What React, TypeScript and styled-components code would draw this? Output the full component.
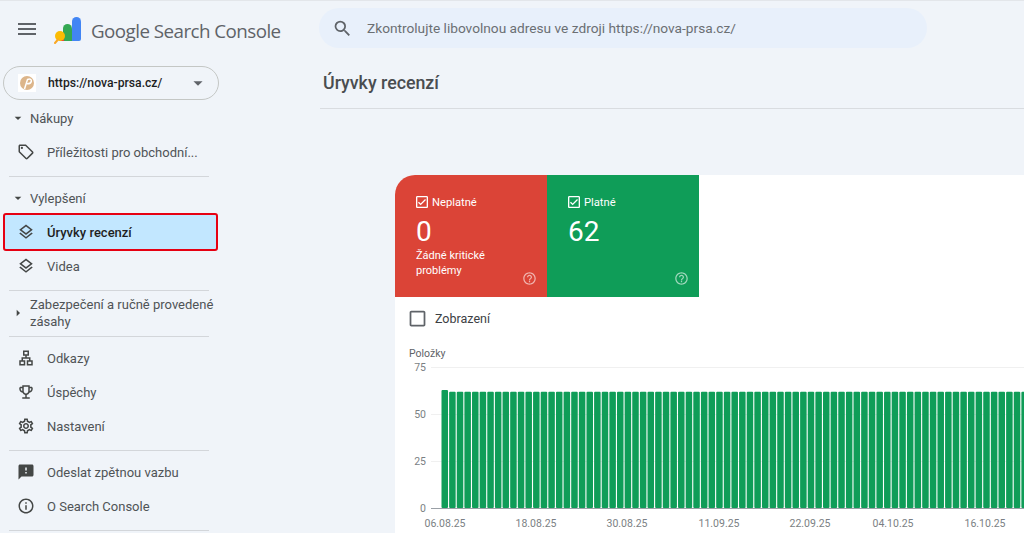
import * as React from "react";
import styled, { createGlobalStyle } from "styled-components";
import {
  MdMenu,
  MdSearch,
  MdArrowDropDown,
  MdArrowRight,
  MdOutlineSell,
  MdOutlineLayers,
  MdOutlineLan,
  MdOutlineEmojiEvents,
  MdOutlineSettings,
  MdFeedback,
  MdInfoOutline,
  MdOutlineCheckBox,
  MdCheckBoxOutlineBlank,
  MdHelpOutline,
} from "react-icons/md";

const GlobalStyle = createGlobalStyle`
  html, body { margin: 0; padding: 0; background: #f0f4f9; }
  body { font-family: Roboto, "Liberation Sans", sans-serif; }
  * { box-sizing: border-box; }
`;

const Page = styled.div`
  width: 1024px;
  height: 533px;
  overflow: hidden;
  background: #f0f4f9;
  border-top: 1px solid #e3e6ea;
  display: flex;
  flex-direction: column;
`;

const Header = styled.header`
  height: 55px;
  flex: none;
  display: flex;
  align-items: center;
  padding-left: 15px;
`;

const MenuButton = styled.div`
  width: 24px;
  height: 24px;
  color: #5f6368;
  font-size: 24px;
  display: flex;
  margin-right: 15px;
`;

const Logo = styled.svg`
  width: 28px;
  height: 28px;
  flex: none;
  margin: 3px 9px 0 0;
`;

const Brand = styled.div`
  width: 228px;
  flex: none;
  margin-top: 5px;
  font-family: "Open Sans", sans-serif;
  font-size: 18.8px;
  letter-spacing: -0.55px;
  color: #5f6368;
  white-space: nowrap;
`;

const SearchBox = styled.div`
  width: 608px;
  height: 40px;
  margin-top: -1px;
  border-radius: 20px;
  background: #e8f0fb;
  display: flex;
  align-items: center;
  padding-left: 13px;
  gap: 14px;
  color: #6b6f73;
  font-size: 13.7px;
  svg {
    font-size: 21px;
    color: #5f6368;
  }
`;

const Body = styled.div`
  flex: 1;
  display: flex;
  min-height: 0;
`;

const Sidebar = styled.nav`
  width: 320px;
  flex: none;
  padding: 10px 0 0 3px;
  color: #4f5356;
  font-size: 13px;
`;

const Property = styled.div`
  width: 216px;
  height: 34px;
  border: 1px solid #c4c7c5;
  border-radius: 17px;
  display: flex;
  align-items: center;
  padding-left: 14px;
  color: #1f1f1f;
  font-weight: 500;
  font-size: 12.2px;
  margin-bottom: 1px;
`;

const Favicon = styled.svg`
  width: 18px;
  height: 18px;
  margin-right: 12px;
  flex: none;
`;

const PropertyUrl = styled.span`
  width: 128px;
  white-space: nowrap;
`;

const PropertyCaret = styled(MdArrowDropDown)`
  font-size: 22px;
  color: #5f6368;
  margin-left: 11px;
  flex: none;
`;

const SectionTitle = styled.div`
  width: 216px;
  min-height: 34px;
  display: flex;
  align-items: center;
  padding-left: 7px;
  line-height: 17px;
  svg {
    font-size: 16px;
    flex: none;
    margin-right: 4px;
    color: #444746;
  }
`;

const WrappedSectionTitle = styled(SectionTitle)`
  padding-top: 1px;
  margin-bottom: -1px;
`;

const Row = styled.div<{ $active?: boolean }>`
  width: 211px;
  height: 34px;
  margin-left: 2px;
  display: flex;
  align-items: center;
  padding-left: 12px;
  gap: 12px;
  background: ${(p) => (p.$active ? "#c2e7ff" : "transparent")};
  color: ${(p) => (p.$active ? "#1f1f1f" : "#4f5356")};
  font-weight: ${(p) => (p.$active ? 500 : 400)};
  outline: ${(p) => (p.$active ? "2px solid #e60012" : "none")};
  border-radius: ${(p) => (p.$active ? "1px" : "0")};
  white-space: nowrap;
  svg {
    font-size: 18px;
    flex: none;
    color: #444746;
  }
`;

const Divider = styled.hr`
  width: 200px;
  height: 1px;
  border: 0;
  background: #d3d6da;
  margin: 7px 0 4px 6px;
`;

const Main = styled.main`
  flex: 1;
  min-width: 0;
  display: flex;
  flex-direction: column;
`;

const TitleBar = styled.div`
  height: 53px;
  flex: none;
  border-bottom: 1px solid #d9dce0;
  padding: 16px 0 0 3px;
  font-size: 17.8px;
  font-weight: 500;
  color: #4a4d50;
`;

const Content = styled.div`
  flex: 1;
  margin: 66px 0 0 75px;
  background: #fff;
  border-top-left-radius: 20px;
`;

const Tiles = styled.div`
  display: flex;
  height: 122px;
`;

const Tile = styled.div<{ $color: string }>`
  width: 152px;
  position: relative;
  padding: 17px 21px 0;
  color: #fff;
  background: ${(p) => p.$color};
  &:first-child {
    border-top-left-radius: 20px;
  }
`;

const TileLabel = styled.div`
  display: flex;
  align-items: center;
  gap: 2px;
  font-size: 11.2px;
  height: 20px;
  svg {
    font-size: 16px;
    flex: none;
    margin-left: -2px;
  }
`;

const TileValue = styled.div`
  font-size: 28px;
  line-height: 32px;
  margin-top: 4px;
`;

const TileNote = styled.div`
  font-size: 11px;
  line-height: 15px;
`;

const HelpIcon = styled.span`
  position: absolute;
  right: 10px;
  bottom: 11px;
  display: flex;
  font-size: 15px;
  opacity: 0.6;
`;

const Toggle = styled.div`
  display: flex;
  align-items: center;
  height: 42px;
  padding-left: 12px;
  gap: 7px;
  font-size: 12.5px;
  color: #3c4043;
  svg {
    font-size: 21px;
    color: #5f6368;
  }
`;

const ChartTitle = styled.div`
  font-size: 10.5px;
  color: #5f6368;
  margin: 8px 0 0 14px;
  height: 15px;
`;

const Chart = styled.svg`
  display: block;
  width: 629px;
  height: 170px;
  text {
    font-family: Roboto, sans-serif;
    font-size: 10.5px;
    fill: #7b7f84;
  }
`;

const BAR_PITCH = 7.63;
const BAR_START = 46.5;
const ticks = [
  { label: "75", y: 5 },
  { label: "50", y: 52 },
  { label: "25", y: 99 },
  { label: "0", y: 146 },
];
const dates = [
  { label: "06.08.25", x: 50 },
  { label: "18.08.25", x: 141 },
  { label: "30.08.25", x: 232 },
  { label: "11.09.25", x: 324 },
  { label: "22.09.25", x: 415 },
  { label: "04.10.25", x: 498 },
  { label: "16.10.25", x: 590 },
];

function ReviewChart() {
  const bars = [...Array(77)].map((_, i) => i);
  return (
    <Chart viewBox="0 0 629 170">
      {ticks.map((t) => (
        <g key={t.label}>
          <line x1="36" x2="629" y1={t.y + 0.5} y2={t.y + 0.5} stroke={t.label === "0" ? "#9aa0a6" : "#f0f0f0"} />
          <text x="31" y={t.y + 4} textAnchor="end">
            {t.label}
          </text>
        </g>
      ))}
      {bars.map((i) => {
        const top = i === 0 ? 28 : 29.7;
        return (
          <rect
            key={i}
            x={BAR_START + i * BAR_PITCH}
            y={top}
            width={BAR_PITCH - 1.1}
            height={146 - top}
            rx="1"
            fill="#0f9d58"
          />
        );
      })}
      {dates.map((d) => (
        <text key={d.label} x={d.x} y="165" textAnchor="middle">
          {d.label}
        </text>
      ))}
    </Chart>
  );
}

export default function App() {
  return (
    <Page>
      <GlobalStyle />
      <Header>
        <MenuButton>
          <MdMenu />
        </MenuButton>
        <Logo viewBox="0 0 28 28">
          <path d="M18 5.5a4.5 4.5 0 0 1 9 0V23a2 2 0 0 1-2 2h-7z" fill="#4285f4" />
          <path d="M9 12.5a4.5 4.5 0 0 1 9 0V25H9z" fill="#34a853" />
          <path d="M5 17h5v8H7a2 2 0 0 1-2-2z" fill="#ea4335" />
          <circle cx="6" cy="20" r="5" fill="#fbbc04" />
          <path d="M4 23.5l-3 3.5" stroke="#f9a825" strokeWidth="2" strokeLinecap="round" />
        </Logo>
        <Brand>Google Search Console</Brand>
        <SearchBox>
          <MdSearch />
          <span>Zkontrolujte libovolnou adresu ve zdroji https://nova-prsa.cz/</span>
        </SearchBox>
      </Header>
      <Body>
        <Sidebar>
          <Property>
            <Favicon viewBox="0 0 18 18">
              <rect width="18" height="18" fill="#fff" />
              <circle cx="9" cy="9" r="7" fill="#dcb58a" />
              <path d="M6.5 15l3-9.5c2.8-1 4.3 0 3.8 2-.4 1.5-2.2 2.4-4.3 2.3" fill="none" stroke="#fff" strokeWidth="1.5" />
            </Favicon>
            <PropertyUrl>https://nova-prsa.cz/</PropertyUrl>
            <PropertyCaret />
          </Property>
          <SectionTitle>
            <MdArrowDropDown />
            Nákupy
          </SectionTitle>
          <Row>
            <MdOutlineSell />
            Příležitosti pro obchodní...
          </Row>
          <Divider />
          <SectionTitle>
            <MdArrowDropDown />
            Vylepšení
          </SectionTitle>
          <Row $active>
            <MdOutlineLayers />
            Úryvky recenzí
          </Row>
          <Row>
            <MdOutlineLayers />
            Videa
          </Row>
          <Divider />
          <WrappedSectionTitle>
            <MdArrowRight />
            Zabezpečení a ručně provedené zásahy
          </WrappedSectionTitle>
          <Divider />
          <Row>
            <MdOutlineLan />
            Odkazy
          </Row>
          <Row>
            <MdOutlineEmojiEvents />
            Úspěchy
          </Row>
          <Row>
            <MdOutlineSettings />
            Nastavení
          </Row>
          <Divider />
          <Row>
            <MdFeedback />
            Odeslat zpětnou vazbu
          </Row>
          <Row>
            <MdInfoOutline />
            O Search Console
          </Row>
          <Divider />
        </Sidebar>
        <Main>
          <TitleBar>Úryvky recenzí</TitleBar>
          <Content>
            <Tiles>
              <Tile $color="#db4437">
                <TileLabel>
                  <MdOutlineCheckBox />
                  Neplatné
                </TileLabel>
                <TileValue>0</TileValue>
                <TileNote>
                  Žádné kritické
                  <br />
                  problémy
                </TileNote>
                <HelpIcon>
                  <MdHelpOutline />
                </HelpIcon>
              </Tile>
              <Tile $color="#0f9d58">
                <TileLabel>
                  <MdOutlineCheckBox />
                  Platné
                </TileLabel>
                <TileValue>62</TileValue>
                <HelpIcon>
                  <MdHelpOutline />
                </HelpIcon>
              </Tile>
            </Tiles>
            <Toggle>
              <MdCheckBoxOutlineBlank />
              Zobrazení
            </Toggle>
            <ChartTitle>Položky</ChartTitle>
            <ReviewChart />
          </Content>
        </Main>
      </Body>
    </Page>
  );
}
